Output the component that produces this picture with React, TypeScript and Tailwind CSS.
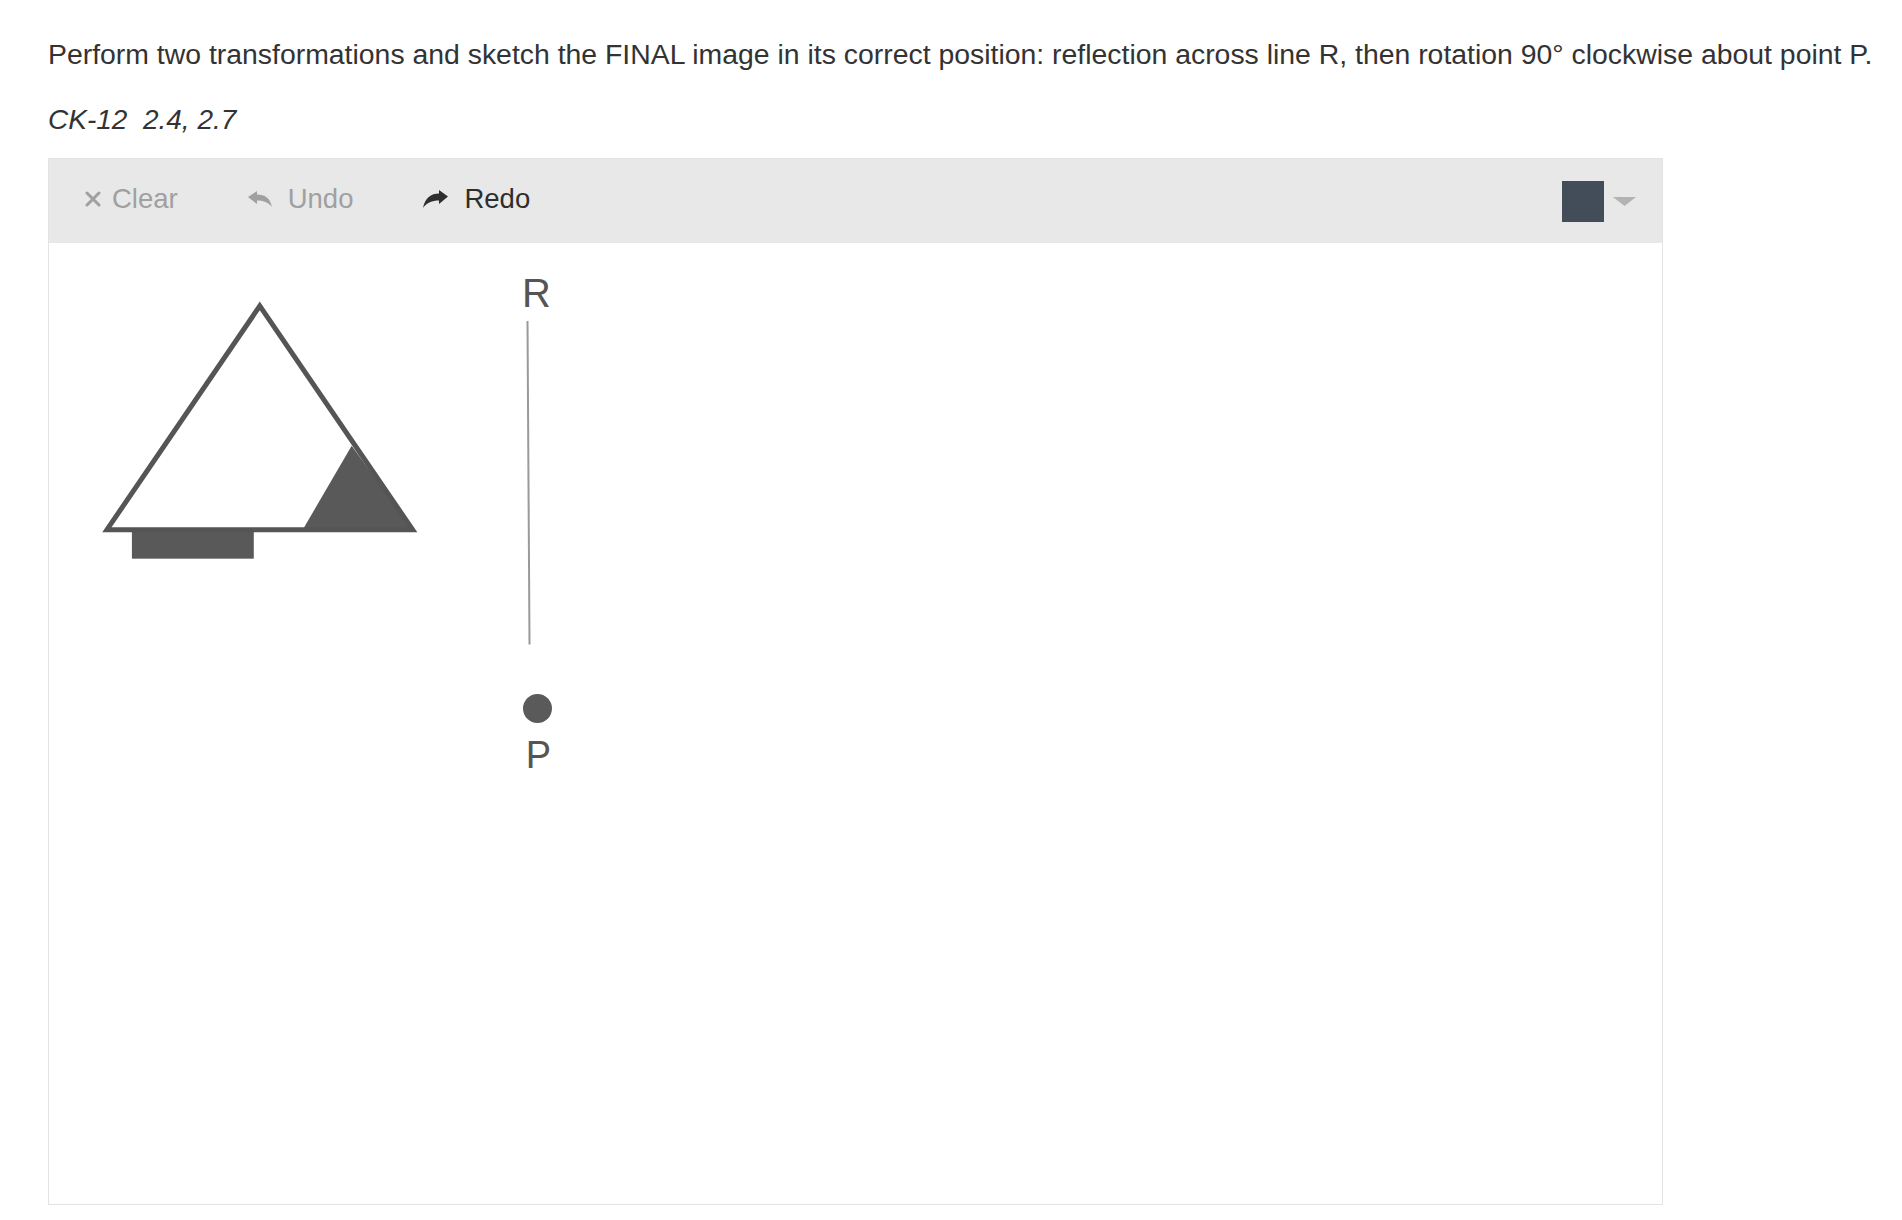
function ClearIcon() {
  return (
    <svg width="16" height="16" viewBox="0 0 16 16">
      <path d="M2 2 L14 14 M14 2 L2 14" stroke="currentColor" strokeWidth="3" strokeLinecap="round" />
    </svg>
  );
}

function UndoIcon() {
  return (
    <svg width="24" height="16" viewBox="0 0 24 16">
      <path d="M0 6 L9 0 L9 3.5 C17 3.5 22 7 24 16 C20 11 15 9.5 9 9.5 L9 13 Z" fill="currentColor" />
    </svg>
  );
}

function RedoIcon() {
  return (
    <svg width="25" height="18" viewBox="0 0 25 18">
      <path d="M25 6.5 L16 0 L16 3.5 C8 3.5 2 8 0 18 C4 12.5 9 10.5 16 10.5 L16 14 Z" fill="currentColor" />
    </svg>
  );
}

function Toolbar() {
  return (
    <div className="flex h-[84px] items-center bg-[#e8e8e8] pb-[4px] pl-[36px] pr-[26px]">
      <button className="flex items-center gap-[11px] text-[#a0a0a0]">
        <ClearIcon />
        <span>Clear</span>
      </button>
      <button className="ml-[70px] flex items-center gap-[16px] text-[#a0a0a0]">
        <UndoIcon />
        <span>Undo</span>
      </button>
      <button className="ml-[70px] flex items-center gap-[16px] text-[#2e2e2e]">
        <RedoIcon />
        <span>Redo</span>
      </button>
      <div className="ml-auto mt-[4px] flex items-center gap-[9px]">
        <div className="h-[41px] w-[42px] bg-[#434c59]" />
        <svg width="23" height="9" viewBox="0 0 23 9">
          <path d="M0 0 L23 0 L11.5 9 Z" fill="#b3b3b3" />
        </svg>
      </div>
    </div>
  );
}

function Canvas() {
  return (
    <div className="relative flex-1 bg-white">
      <svg className="absolute inset-0 h-full w-full" viewBox="49 240 1613 962" preserveAspectRatio="xMinYMin meet">
        <polygon points="303,527 352,443 413,527" fill="#595959" />
        <rect x="132" y="528" width="122" height="28" fill="#595959" />
        <polygon
          points="260,303 107,527 413,527"
          fill="none"
          stroke="#555"
          strokeWidth="5"
          strokeLinejoin="miter"
        />
        <line x1="528" y1="318" x2="530" y2="642" stroke="#9a9a9a" strokeWidth="2" />
        <circle cx="538" cy="706" r="14.5" fill="#5a5a5a" />
        <text x="537" y="304" textAnchor="middle" fontSize="40" fill="#555" fontFamily="'Liberation Sans', Arial, sans-serif">
          R
        </text>
        <text x="539" y="766" textAnchor="middle" fontSize="38" fill="#555" fontFamily="'Liberation Sans', Arial, sans-serif">
          P
        </text>
      </svg>
    </div>
  );
}

export default function App() {
  return (
    <div className="min-h-screen bg-white px-[48px] pt-[35px] font-['Liberation_Sans',Arial,sans-serif] text-[#333]">
      <p className="whitespace-nowrap text-[28.4px] leading-[38px]">
        Perform two transformations and sketch the FINAL image in its correct position: reflection across line R, then rotation 90° clockwise about point P.
      </p>
      <p className="mt-[28px] text-[28px] leading-[38px] italic">CK-12&nbsp; 2.4, 2.7</p>

      {/* Sketch board */}
      <div className="mt-[19px] flex h-[1047px] w-[1615px] flex-col border border-[#e3e3e3] text-[27.5px]">
        <Toolbar />
        <Canvas />
      </div>
    </div>
  );
}
